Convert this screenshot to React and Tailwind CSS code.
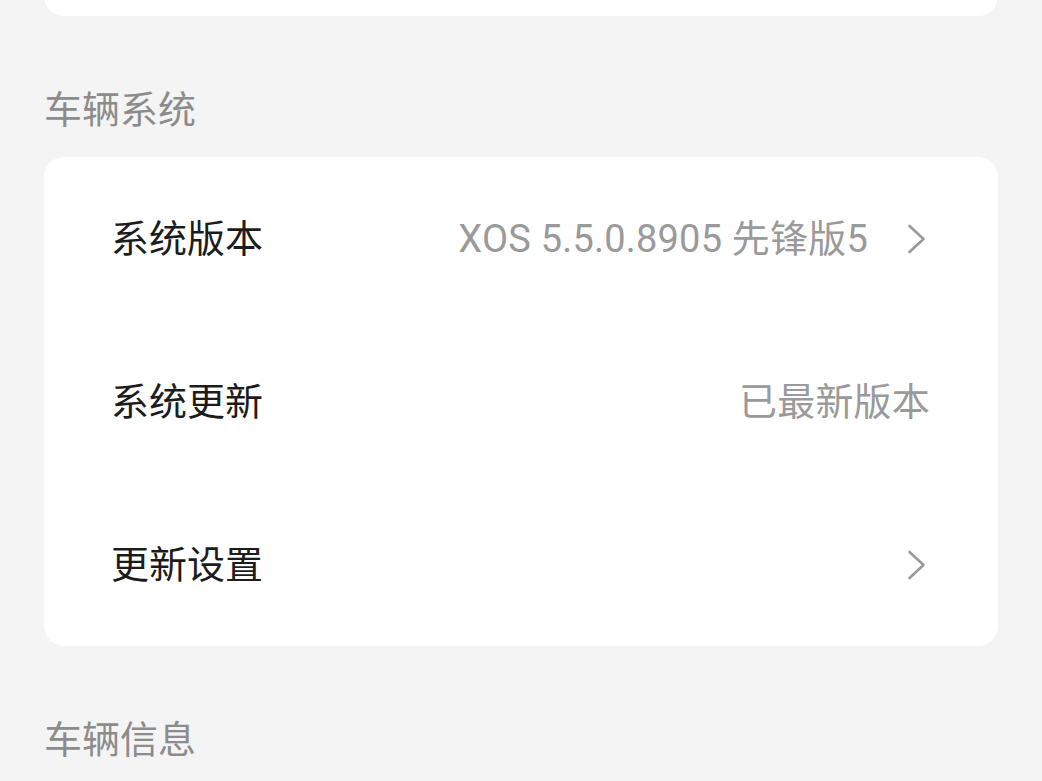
import React from 'react';

const font = { fontFamily: 'Roboto, "Noto Sans CJK SC", sans-serif' };

function Chevron() {
  return (
    <svg width="24" height="30" viewBox="0 0 24 30" fill="none" className="shrink-0">
      <path d="M3.5 2 L17.5 15 L3.5 28" stroke="#9a9a9a" strokeWidth="2.6" strokeLinecap="round" strokeLinejoin="round" />
    </svg>
  );
}

function Row({ label, value, arrow }) {
  return (
    <div className="flex items-center justify-between h-[163px] pl-[67px] pr-[68px]">
      <span className="text-[38px] leading-[50px] text-[#1c1c1c]">{label}</span>
      <div className="flex items-center gap-[38px]">
        {value && <span className="text-[38px] leading-[50px] tracking-[0.2px] text-[#9a9a9a]">{value}</span>}
        {arrow && <Chevron />}
      </div>
    </div>
  );
}

function SectionTitle({ children }) {
  return (
    <div className="pt-[69px] pb-[22px] text-[38px] leading-[50px] text-[#8c8c8c]">
      {children}
    </div>
  );
}

export default function App() {
  return (
    <div className="min-h-screen bg-[#f4f4f4] px-[44px] overflow-hidden" style={font}>
      {/* previous card, mostly scrolled away */}
      <div className="-mt-[64px] h-[80px] bg-white rounded-[20px]" />

      <SectionTitle>车辆系统</SectionTitle>
      <div className="bg-white rounded-[20px]">
        <Row label="系统版本" value="XOS 5.5.0.8905 先锋版5" arrow />
        <Row label="系统更新" value="已最新版本" />
        <Row label="更新设置" arrow />
      </div>

      <SectionTitle>车辆信息</SectionTitle>
    </div>
  );
}
